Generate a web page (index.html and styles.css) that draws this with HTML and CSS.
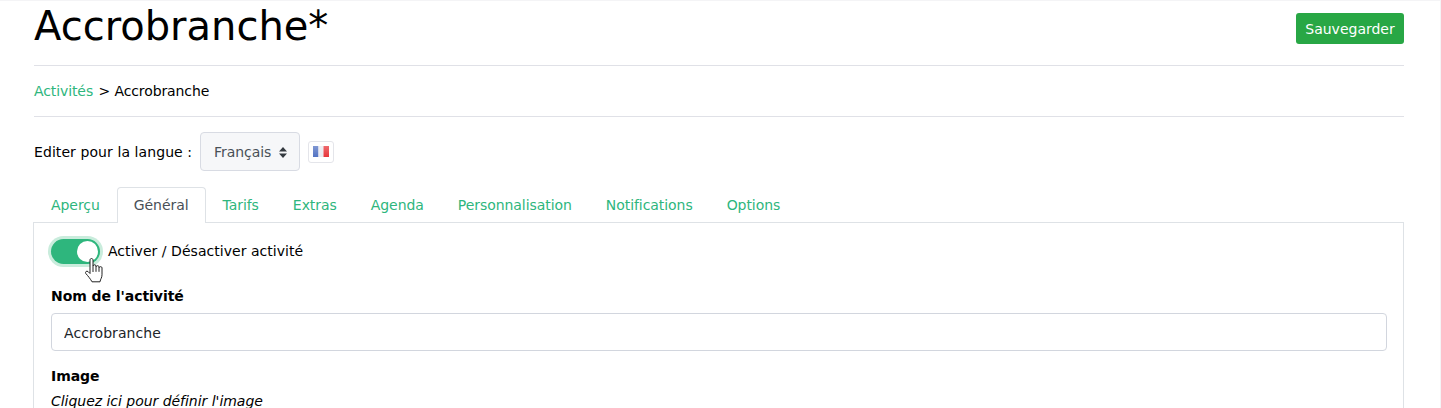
FILE: index.html
```html
<!DOCTYPE html>
<html lang="fr">
<head>
    <meta charset="UTF-8">
    <title>Accrobranche</title>
    <link rel="stylesheet" href="styles.css">
</head>
<body>
    <div class="container">
        <div class="title-row">
            <h1>Accrobranche*</h1>
            <button class="save-button">Sauvegarder</button>
        </div>
        <div class="breadcrumb"><a href="#">Activités</a> &gt; Accrobranche</div>

        <div class="lang-row">
            <span class="lang-label">Editer pour la langue :</span>
            <div class="lang-select">
                Français
                <svg class="updown" width="8" height="11" viewBox="0 0 8 11"><path d="M4 0L8 4.400H0zM4 11L0 6.600H8z" fill="#343a40"/></svg>
            </div>
            <div class="flag-box">
                <svg width="16" height="11" viewBox="0 0 16 11">
                    <defs>
                        <linearGradient id="shine" x1="0" y1="0" x2="0" y2="1">
                            <stop offset="0" stop-color="#fff" stop-opacity="0.3"/>
                            <stop offset="1" stop-color="#fff" stop-opacity="0.05"/>
                        </linearGradient>
                    </defs>
                    <rect width="5.500" height="11" fill="#4a6cc0"/>
                    <rect x="5.500" width="5" height="11" fill="#e8e8ee"/>
                    <rect x="10.500" width="5.500" height="11" fill="#e62b30"/>
                    <rect width="16" height="11" fill="url(#shine)"/>
                </svg>
            </div>
        </div>

        <ul class="tabs">
            <li><a href="#">Aperçu</a></li>
            <li class="active"><a href="#">Général</a></li>
            <li><a href="#">Tarifs</a></li>
            <li><a href="#">Extras</a></li>
            <li><a href="#">Agenda</a></li>
            <li><a href="#">Personnalisation</a></li>
            <li><a href="#">Notifications</a></li>
            <li><a href="#">Options</a></li>
        </ul>

        <div class="tab-panel">
            <div class="switch-row">
                <span class="switch">
                    <span class="knob"></span>
                    <svg class="hand" width="18" height="25" viewBox="0 0 18 25">
                        <path d="M5 2c0-2 3-2 3 0v6c.3-1.600 3-1.600 3 0v.8c.3-1.500 3-1.500 3 0v1c.3-1.500 3-1.500 3 0v7c0 3-1.500 4-2 7H7C5.500 21 3 18 .8 15.500-.2 14 1.500 12.500 3 13.500L5 15.500z" fill="#fff" stroke="#222" stroke-width="1" stroke-linejoin="round"/>
                        <path d="M8 8v6M11 8.800v5M14 9.800v4" fill="none" stroke="#222" stroke-width="1"/>
                    </svg>
                </span>
                <label class="switch-label">Activer / Désactiver activité</label>
            </div>
            <div class="field">
                <label class="field-label">Nom de l'activité</label>
                <input class="text-input" type="text" value="Accrobranche">
            </div>
            <div class="field">
                <label class="field-label">Image</label>
                <em class="image-hint">Cliquez ici pour définir l'image</em>
            </div>
        </div>
    </div>
</body>
</html>
```

FILE: styles.css
```css
body {
    margin: 0;
    height: 408px;
    overflow: hidden;
    font-family: "DejaVu Sans", Verdana, sans-serif;
    font-size: 14px;
    line-height: 21px;
    color: #000;
    background: #fff;
    border-top: 1px solid #f4f4f6;
    border-right: 1px solid #f4f4f6;
    box-sizing: border-box;
}
a {
    color: #2eb67d;
    text-decoration: none;
}
.container {
    margin: 0 36px 0 34px;
}
.title-row {
    display: flex;
    justify-content: space-between;
    align-items: flex-start;
    height: 64px;
    border-bottom: 1px solid #e0e1e7;
}
h1 {
    margin: 0;
    font-size: 40px;
    font-weight: 400;
    line-height: 50px;
}
.save-button {
    margin-top: 12px;
    width: 108px;
    height: 31px;
    padding: 0;
    border: none;
    border-radius: 3px;
    background-color: #28a745;
    color: #fff;
    font-family: inherit;
    font-size: 14px;
}
.breadcrumb {
    height: 50px;
    line-height: 51px;
    letter-spacing: -0.1px;
    border-bottom: 1px solid #e0e1e7;
}
.breadcrumb a {
    margin-right: 1px;
}
.lang-row {
    display: flex;
    align-items: center;
    margin-top: 15px;
    height: 39px;
}
.lang-label {
    margin-right: 8px;
    padding-top: 1px;
    letter-spacing: 0.08px;
}
.lang-select {
    display: flex;
    align-items: center;
    box-sizing: border-box;
    width: 100px;
    height: 39px;
    padding: 1px 0 0 13px;
    border: 1px solid #d8dbe3;
    border-radius: 4px;
    background: #f6f7f9;
    color: #495057;
    letter-spacing: -0.06px;
}
.updown {
    margin-left: 8px;
}
.flag-box {
    display: flex;
    align-items: center;
    justify-content: center;
    box-sizing: border-box;
    width: 26px;
    height: 22px;
    margin-left: 8px;
    border: 1px solid #e4e5ea;
    border-radius: 3px;
}
.tabs {
    display: flex;
    margin: 16px 0 0;
    padding: 0;
    list-style: none;
    letter-spacing: -0.06px;
}
.tabs li a {
    display: block;
    box-sizing: border-box;
    height: 36px;
    padding: 7px 16px 0;
    border: 1px solid transparent;
    border-bottom: none;
}
.tabs li.active a {
    position: relative;
    z-index: 1;
    background: #fff;
    border-color: #dee2e6;
    border-radius: 4px 4px 0 0;
    color: #495057;
}
.tab-panel {
    box-sizing: border-box;
    height: 200px;
    margin-top: -1px;
    margin-left: -1px;
    padding: 16px 16px 0 17px;
    border: 1px solid #dee2e6;
}
.switch-row {
    display: flex;
    align-items: center;
    height: 25px;
}
.switch {
    position: relative;
    width: 49px;
    height: 25px;
    margin-right: 8px;
    border-radius: 13px;
    background: #2eb67d;
    box-shadow: 0 0 0 3px #c9ecdc;
}
.knob {
    position: absolute;
    top: 2px;
    right: 2px;
    width: 21px;
    height: 21px;
    border-radius: 50%;
    background: #fff;
}
.hand {
    position: absolute;
    top: 19px;
    left: 34px;
}
.switch-label {
    letter-spacing: 0.04px;
}
.field {
    margin-top: 15px;
}
.switch-row + .field {
    margin-top: 22px;
}
.field-label {
    display: block;
    font-weight: 700;
    margin-bottom: 6px;
    letter-spacing: -0.05px;
}
.text-input {
    display: block;
    box-sizing: border-box;
    width: 100%;
    height: 38px;
    padding: 1px 12px 0;
    border: 1px solid #d2d6de;
    border-radius: 4px;
    font-family: inherit;
    font-size: 14px;
    letter-spacing: 0.08px;
    color: #212529;
}
.image-hint {
    display: block;
    margin-top: -2px;
    letter-spacing: -0.03px;
}
```
